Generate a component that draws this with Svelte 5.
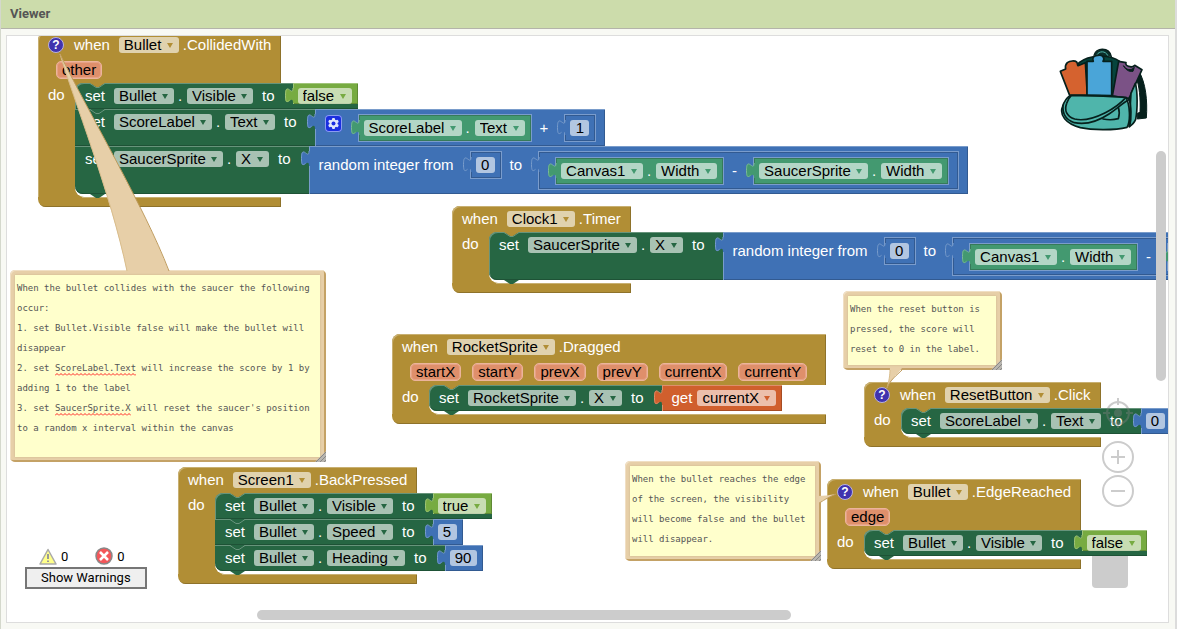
<script>
  const drop = (v) => ({ t: 'drop', v });
  const label = (v) => ({ t: 'label', v });
  const num = (v) => ({ t: 'num', v });
  const value = (kind, ...items) => ({ t: 'value', kind, items });
  const set = (component, property, val) => [
    label('set'), drop(component), { t: 'dot' }, drop(property), label('to'), val
  ];
  const getter = (component, property) =>
    value('getter', drop(component), { t: 'dot' }, drop(property));
  const number = (n) => value('math leaf', num(n));
  const bool = (b) => value('logic', drop(b));
  const randomUpToWidth = () =>
    value('math group lead',
      label('random integer from'), number('0'), label('to'),
      value('math group',
        getter('Canvas1', 'Width'), label('-'), getter('SaucerSprite', 'Width')));

  const events = [
    {
      x: 31, y: -4, comment: true, component: 'Bullet', name: 'CollidedWith', params: ['other'],
      body: [
        set('Bullet', 'Visible', bool('false')),
        set('ScoreLabel', 'Text',
          value('math group', { t: 'gear' }, getter('ScoreLabel', 'Text'), label('+'), number('1'))),
        set('SaucerSprite', 'X', randomUpToWidth())
      ]
    },
    {
      x: 445, y: 170, component: 'Clock1', name: 'Timer', params: [],
      body: [set('SaucerSprite', 'X', randomUpToWidth())]
    },
    {
      x: 385, y: 298, component: 'RocketSprite', name: 'Dragged',
      params: ['startX', 'startY', 'prevX', 'prevY', 'currentX', 'currentY'],
      body: [set('RocketSprite', 'X', value('variable', { t: 'label', v: 'get', tight: true }, drop('currentX')))]
    },
    {
      x: 857, y: 346, comment: true, component: 'ResetButton', name: 'Click', params: [],
      body: [set('ScoreLabel', 'Text', number('0'))]
    },
    {
      x: 171, y: 431, component: 'Screen1', name: 'BackPressed', params: [],
      body: [
        set('Bullet', 'Visible', bool('true')),
        set('Bullet', 'Speed', number('5')),
        set('Bullet', 'Heading', number('90'))
      ]
    },
    {
      x: 820, y: 443, comment: true, component: 'Bullet', name: 'EdgeReached', params: ['edge'],
      body: [set('Bullet', 'Visible', bool('false'))]
    }
  ];

  const notes = [
    {
      x: 3, y: 234, w: 316, h: 192,
      text: "When the bullet collides with the saucer the following occur:\n1. set Bullet.Visible false will make the bullet will disappear\n2. set ScoreLabel.Text will increase the score by 1 by adding 1 to the label\n3. set SaucerSprite.X will reset the saucer's position to a random x interval within the canvas",
      typos: [{ line: 4, col: 7, len: 15 }, { line: 6, col: 7, len: 14 }]
    },
    { x: 836, y: 255, w: 159, h: 79, text: 'When the reset button is pressed, the score will reset to 0 in the label.', typos: [] },
    { x: 618, y: 425, w: 196, h: 100, text: 'When the bullet reaches the edge of the screen, the visibility will become false and the bullet will disappear.', typos: [] }
  ];
</script>

{#snippet dropdown(v)}
  <span class="drop">
    <select aria-label={v}><option>{v}</option></select>
    <svg width="6" height="5" viewBox="0 0 6 5" aria-hidden="true"><path d="M0 0h6L3 5z" /></svg>
  </span>
{/snippet}

{#snippet piece(item)}
  {#if item.t === 'drop'}
    {@render dropdown(item.v)}
  {:else if item.t === 'label'}
    <span class="label" class:tight={item.tight}>{item.v}</span>
  {:else if item.t === 'dot'}
    <span class="dot">.</span>
  {:else if item.t === 'num'}
    <input class="num" type="text" aria-label="Number" value={item.v} style="width: {item.v.length * 8 + 11}px" />
  {:else if item.t === 'gear'}
    <button class="gear" aria-label="Change inputs">
      <svg width="17" height="17" viewBox="0 0 17 17" aria-hidden="true">
        <g fill="#dfe6fb">
          {#each [0, 60, 120] as a}
            <rect x="7" y="3" width="3" height="11" rx="1" transform="rotate({a} 8.5 8.5)" />
          {/each}
          <circle cx="8.5" cy="8.5" r="4" />
        </g>
        <circle cx="8.5" cy="8.5" r="2" fill="#1a2ee0" />
      </svg>
    </button>
  {:else}
    <div class="value {item.kind}">
      <svg class="tab" width="9" height="22" viewBox="0 0 9 22" aria-hidden="true">
        <path class="tab-fill" d="M9 5H8c0 10-8-8-8 7.5s8-2.5 8 7.5h1z" />
        <path class="tab-line" d="M8 5c0 10-7.500-8-7.500 7.500 0 8 2 6.500 4 4.800" />
      </svg>
      {#each item.items as inner}{@render piece(inner)}{/each}
    </div>
  {/if}
{/snippet}

<main class="viewer">
  <h1>Viewer</h1>
  <div class="canvas">
    <div class="trash"></div>

    {#each events as ev}
      <section class="event" style="left: {ev.x}px; top: {ev.y}px">
        <header>
          <div class="title">
            {#if ev.comment}<button class="help" aria-label="Comment">?</button>{/if}
            <span class="label">when</span>
            {@render dropdown(ev.component)}
            <span class="name">.{ev.name}</span>
          </div>
          {#if ev.params.length}
            <div class="params">
              {#each ev.params as p}<span class="param">{p}</span>{/each}
            </div>
          {/if}
        </header>
        <div class="body">
          <span class="do">do</span>
          <div class="mouth">
            {#each ev.body as row, i}
              <div class="statement" class:first={i === 0} class:last={i === ev.body.length - 1}>
                <svg class="notch" width="15" height="5" viewBox="0 0 15 5" aria-hidden="true">
                  <path class="notch-fill" d="M0 0l6 4h3l6-4z" />
                  <path class="notch-line" d="M0 .5l6 4h3l6-4" />
                </svg>
                {#each row as item}{@render piece(item)}{/each}
                {#if i === ev.body.length - 1}
                  <svg class="bump" width="15" height="4" viewBox="0 0 15 4" aria-hidden="true">
                    <path d="M0 0l6 4h3l6-4z" />
                  </svg>
                {/if}
              </div>
            {/each}
          </div>
        </div>
        <div class="foot"></div>
      </section>
    {/each}

    {#each notes as n}
      <div class="note" style="left: {n.x}px; top: {n.y}px; width: {n.w}px; height: {n.h}px">
        <textarea aria-label="Comment text" spellcheck="false" value={n.text}></textarea>
        {#each n.typos as t}
          <svg class="typo" height="3" aria-hidden="true"
            style="left: calc(7px + {t.col}ch); top: {t.line * 20 + 23}px; width: {t.len}ch">
            <defs>
              <pattern id="wave{t.line}" width="4" height="3" patternUnits="userSpaceOnUse">
                <path d="M0 2.500L2 .5l2 2" fill="none" stroke="#f22" />
              </pattern>
            </defs>
            <rect width="100%" height="3" fill="url(#wave{t.line})" />
          </svg>
        {/each}
        <svg class="grip" width="11" height="11" viewBox="0 0 11 11" aria-hidden="true">
          <path d="M0 11L11 0v11z" fill="#b9b6b0" />
          <path d="M1 11L11 1M5 11l6-6M9 11l2-2" stroke="#888" fill="none" />
        </svg>
      </div>
    {/each}

    <svg class="tails" width="900" height="480" viewBox="0 0 900 480" aria-hidden="true">
      <path class="tail" d="M53 18C66 62 104 158 120 236H162C138 172 79 72 53 18z" />
      <path class="edge" d="M53 18C66 62 104 158 120 235" />
      <path class="edge deep" d="M53 18C79 72 138 172 162 235" />
      <path class="tail" d="M880 352C882 346 883 338 883 332H895C890 339 883 344 880 352z" />
      <path class="edge" d="M880 352C882 346 883 338 883 334" />
      <path class="edge deep" d="M880 352C883 344 890 339 895 334" />
      <path class="tail" d="M829 458C822 459 817 460 811 460V467C817 464 822 461 829 458z" />
      <path class="edge deep" d="M829 458C822 461 817 464 814 466" />
    </svg>

    <svg class="backpack" width="90" height="84" viewBox="58 54 270 252" role="img" aria-label="Backpack">
      <g stroke="#06201c" stroke-linejoin="round" stroke-linecap="round">
        <path d="M163 76c4-24 46-26 52 4" fill="#0b2f2a" stroke-width="4" />
        <path d="M172 74c6-12 26-12 32 2" fill="none" stroke="#4fb5ab" stroke-width="3" />
        <path d="M118 98c30-24 92-26 122-4l48 30-20 80-170-6z" fill="#06443c" stroke-width="5" />
        <path d="M298 124c20 34 26 88 22 140l-27 3v-17l8-3c2-42-2-82-12-104z" fill="#06201c" stroke-width="3" />
        <path d="M62 124l16-7c-2-8 0-14 5-19 8-6 22-7 28-2 3 4 2 9 4 11l22-9 6 98H90z" fill="#d5622f" stroke-width="5" />
        <path d="M237 94l22 4c-2 5 1 9 8 11 8 3 15 0 18-3l22 13-39 86-50-7z" fill="#7b5286" stroke-width="5" />
        <path d="M252 108c8 12 22 15 32 4l-4 12c-12 2-22-4-28-16z" fill="#06201c" stroke-width="3" />
        <path d="M142 94h19c-4-9 0-15 8-17 8-2 18-1 21 3 4 5 3 10 0 14h26v103l-74-2z" fill="#4aa5d8" stroke-width="5" />
        <path d="M274 190l13-30c7 24 7 78 1 108-5 12-12 18-20 22z" fill="#4fb5ab" stroke-width="5" />
        <path d="M92 196c62-1 120-1 168 8 10 20 14 68 2 88-36 9-104 9-140 1-44-12-64-38-53-64 4-14 12-26 23-33z" fill="#4fb5ab" stroke-width="5" />
        <path d="M236 232c4 12 3 24 0 34-14 4-32 4-46 1" fill="none" stroke-width="5" />
        <path d="M95 197c64-1 112 1 164 5-14 16-38 34-62 46-28 14-64 26-92 19-24-8-32-26-24-47 3-10 8-18 14-23z" fill="#4fb5ab" stroke-width="5" />
        <path d="M70 226c-2 24 8 43 34 52 36 7 74-6 104-26 24-16 42-34 62-44" fill="none" stroke-width="5" />
        <path d="M268 206c7 20 8 56 2 84" fill="none" stroke-width="5" />
      </g>
    </svg>

    <div class="zoom">
      <button aria-label="Center blocks">
        <svg width="32" height="34" viewBox="0 0 32 34" fill="none" stroke="#808080" stroke-width="2" opacity=".4" aria-hidden="true">
          <circle cx="16" cy="17" r="11" /><circle cx="16" cy="17" r="3" fill="#808080" />
          <path d="M16 2v7M16 25v7M1 17h7M24 17h7" />
        </svg>
      </button>
      <button aria-label="Zoom in">
        <svg width="32" height="32" viewBox="0 0 32 32" fill="none" stroke="#ccc" stroke-width="2" aria-hidden="true">
          <circle cx="16" cy="16" r="15" /><path d="M9 16h14M16 9v14" />
        </svg>
      </button>
      <button aria-label="Zoom out">
        <svg width="32" height="32" viewBox="0 0 32 32" fill="none" stroke="#ccc" stroke-width="2" aria-hidden="true">
          <circle cx="16" cy="16" r="15" /><path d="M9 16h14" />
        </svg>
      </button>
    </div>

    <div class="warnings">
      <div class="counts">
        <span>
          <svg width="18" height="17" viewBox="0 0 18 17" aria-hidden="true">
            <path d="M9 1.500L17 16H1z" fill="#ffff8a" stroke="#aaa" stroke-width="1.500" stroke-linejoin="round" />
            <path d="M9 6v5M9 12.500v1.500" stroke="#999" stroke-width="2" />
          </svg>0
        </span>
        <span>
          <svg width="18" height="18" viewBox="0 0 18 18" aria-hidden="true">
            <circle cx="9" cy="9" r="8" fill="#f4575a" stroke="#888" stroke-width="1.500" />
            <path d="M5 5l8 8M13 5l-8 8" stroke="#fff" stroke-width="2.500" />
          </svg>0
        </span>
      </div>
      <button>Show Warnings</button>
    </div>

    <div class="bar vertical"></div>
    <div class="bar horizontal"></div>
  </div>
</main>

<style>
  :global(body) { margin: 0; background: #f8f9f4; }
  .viewer {
    box-sizing: border-box;
    min-height: 100vh;
    display: flex;
    flex-direction: column;
    border-left: 1px solid #d4d8cc;
    border-right: 2px solid #dcdcdc;
    font-family: Roboto, sans-serif;
  }
  h1 {
    margin: 0;
    padding: 0 9px;
    height: 28px;
    background: #ccdcab;
    border-bottom: 1px solid #b4b4aa;
    color: #555;
    font-size: 13px;
    line-height: 27px;
    font-weight: 700;
  }
  .canvas {
    position: relative;
    flex: 1;
    margin: 6px 6px 6px 5px;
    border: 1px solid #ddd;
    background: #fff;
    overflow: hidden;
  }
  button { font: inherit; padding: 0; margin: 0; border: 0; background: none; }

  .event {
    position: absolute;
    color: #fff;
    font-family: "Liberation Sans", Arial, sans-serif;
    font-size: 15px;
    line-height: 26px;
    white-space: nowrap;
    --c: #b18e35;
    --light: #c8b072;
    --dark: #8e722a;
  }
  header {
    background: var(--c);
    border-radius: 8px 0 0 0;
    box-shadow: inset 1px 1px var(--light), inset -1px 0 var(--dark);
  }
  .title { display: flex; align-items: center; gap: 4px; height: 26px; padding: 0 10px 0 5px; }
  .label { padding: 0 5px; }
  .tight { padding-right: 1px; }
  .dot { min-width: 5px; }
  .help {
    box-sizing: border-box;
    width: 16px;
    height: 16px;
    margin: 0 1px 0 5px;
    border: 1px solid #b9b3dd;
    border-radius: 50%;
    background: #4033ae;
    color: #fff;
    font-size: 12px;
    font-weight: 700;
    line-height: 14px;
    text-align: center;
  }
  .params { display: flex; gap: 11px; height: 25px; padding: 3px 19px 0 18px; box-sizing: border-box; }
  .param {
    box-sizing: border-box;
    height: 18px;
    padding: 0 5px;
    border: 1px solid #ecb49c;
    border-radius: 5px;
    background: #df8f6b;
    color: #000;
    line-height: 16px;
    box-shadow: inset 0 0 0 1px #e6a285;
  }
  .body { display: flex; background: var(--c); box-shadow: inset 1px 0 var(--light); }
  .do { box-sizing: border-box; width: 37px; padding-left: 10px; line-height: 24px; }
  .mouth {
    flex: 1;
    width: 0;
    display: flex;
    flex-direction: column;
    align-items: flex-start;
    padding-bottom: 3px;
    border-radius: 8px 0 0 9px;
    background: #fff;
  }
  .foot {
    height: 10px;
    background: var(--c);
    border-radius: 0 0 0 8px;
    box-shadow: inset -1px -1px var(--dark);
  }
  .foot::before {
    content: "";
    display: block;
    height: 1px;
    margin-left: 44px;
    background: var(--light);
  }

  .statement {
    --c: #266643;
    --light: #67947b;
    --dark: #1e5236;
    position: relative;
    display: flex;
    align-items: flex-start;
    gap: 4px;
    padding-left: 5px;
    background: var(--c);
    box-shadow: inset 0 1px var(--light), inset 0 -1px var(--dark);
  }
  .first { border-top-left-radius: 8px; box-shadow: inset 1px 1px var(--light), inset 0 -1px var(--dark); }
  .last { border-bottom-left-radius: 8px; }
  .notch, .bump { position: absolute; left: 15px; }
  .notch { top: 0; }
  .bump { top: 100%; fill: var(--c); }
  .notch-fill { fill: #266643; }
  .first .notch-fill { fill: #b18e35; }
  .notch-line { fill: none; stroke: var(--light); }

  .value {
    position: relative;
    display: flex;
    align-items: flex-start;
    gap: 4px;
    margin-left: 8px;
    padding: 0 6px 0 5px;
    background: var(--c);
    box-shadow: inset 1px 1px var(--light), inset -1px -1px var(--dark);
  }
  .statement > .value { margin-left: 9px; }
  .value .value { box-shadow: inset 1px 1px var(--dark), inset -1px -1px var(--dark), 0 0 0 1px #7a9ccc; }
  .getter { --c: #439970; --light: #7bb89b; --dark: #367a5a; }
  .math { --c: #3f71b5; --light: #799ccb; --dark: #325a91; }
  .logic { --c: #77ab41; --light: #a0c47a; --dark: #5f8934; }
  .variable { --c: #d05f2d; --light: #de8f6c; --dark: #a64c24; }
  .group { padding: 6px 10px 5px 10px; }
  .lead { padding-left: 5px; }
  .value .group { padding-left: 9px; }
  .tab { position: absolute; left: -8px; top: 0; }
  .tab-fill { fill: var(--c); }
  .tab-line { fill: none; stroke: var(--light); }

  .drop {
    position: relative;
    display: flex;
    height: 16px;
    border-radius: 3px;
    background: rgba(255, 255, 255, .6);
  }
  .statement .drop { margin-top: 5px; }
  .drop select {
    appearance: none;
    height: 16px;
    margin: 0;
    padding: 0 17px 0 5px;
    border: 0;
    background: none;
    color: #000;
    font: inherit;
    line-height: 16px;
  }
  .drop svg { position: absolute; right: 6px; top: 6px; fill: var(--c); pointer-events: none; }
  .num {
    box-sizing: border-box;
    height: 16px;
    margin: 5px 0;
    padding: 0;
    border: 0;
    border-radius: 3px;
    background: rgba(255, 255, 255, .6);
    color: #000;
    font: inherit;
    line-height: 16px;
    text-align: center;
  }
  .gear {
    display: flex;
    width: 17px;
    height: 17px;
    margin-right: 5px;
    border-radius: 4px;
    background: #1a2ee0;
    box-shadow: inset 0 0 0 1px #8b9cf0;
  }

  .note {
    position: absolute;
    box-sizing: border-box;
    padding: 5px 6px 5px 5px;
    border-radius: 5px;
    background: #e7cfa8;
    box-shadow: inset 1px 1px #f0dfc4, inset -2px -2px #c4a266;
    font: 9px "DejaVu Sans Mono", monospace;
  }
  .note textarea {
    box-sizing: border-box;
    display: block;
    width: 100%;
    height: 100%;
    margin: 0;
    padding: 3px 2px;
    border: 0;
    resize: none;
    overflow: hidden;
    background: #ffffcc;
    box-shadow: 0 0 2px #c9b78a;
    color: #555;
    font: inherit;
    line-height: 20px;
  }
  .typo { position: absolute; }
  .grip { position: absolute; right: 0; bottom: 0; }
  .tails { position: absolute; left: 0; top: 0; pointer-events: none; }
  .tail { fill: #e7cfa8; }
  .edge { fill: none; stroke: #d9bd8c; }
  .deep { stroke: #bf9b5c; }

  .backpack { position: absolute; right: 19px; top: 12px; }
  .zoom { position: absolute; right: 34px; bottom: 115px; display: flex; flex-direction: column; gap: 2px; }
  .zoom button { display: flex; }
  .zoom button:first-child { margin-bottom: 9px; }
  .trash {
    position: absolute;
    right: 40px;
    bottom: 34px;
    width: 36px;
    height: 44px;
    border-radius: 0 0 4px 4px;
    background: #ccc;
  }
  .bar { position: absolute; border-radius: 5px; background: #ccc; }
  .vertical { right: 2px; top: 115px; width: 10px; height: 230px; }
  .horizontal { left: 250px; bottom: 2px; width: 46%; height: 10px; }

  .warnings { position: absolute; left: 18px; bottom: 33px; font-size: 13px; color: #000; }
  .counts { display: flex; gap: 27px; padding: 0 14px 2px; }
  .counts span { display: flex; align-items: center; gap: 4px; height: 18px; }
  .warnings button {
    box-sizing: border-box;
    height: 22px;
    padding: 0 14px;
    border: 2px solid #767676;
    background: #efefef;
    color: #000;
    line-height: 18px;
  }
</style>
